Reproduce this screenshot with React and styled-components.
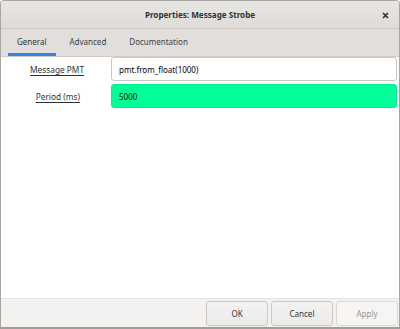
import styled, { createGlobalStyle } from 'styled-components';

const GlobalStyle = createGlobalStyle`
  html, body { margin: 0; padding: 0; background: #fff; }
  body { font-family: "Noto Sans", "Open Sans", sans-serif; font-size: 8px; color: #2e3436; }
`;

const Window = styled.div`
  width: 400px;
  height: 329px;
  box-sizing: border-box;
  border: 1px solid #a8a6a3;
  border-bottom: 2px solid #9f9d9a;
  border-radius: 4px 4px 0 0;
  display: flex;
  flex-direction: column;
  background: #fff;
  overflow: hidden;
`;

const TitleBar = styled.div`
  height: 27px;
  flex: none;
  display: flex;
  align-items: center;
  justify-content: center;
  position: relative;
  background: linear-gradient(#e8e6e3, #dedbd8);
  font-weight: bold;
  font-size: 8.1px;
  color: #2e3436;
`;

const CloseButton = styled.div`
  position: absolute;
  right: 10px;
  top: 10px;
  width: 8px;
  height: 8px;
  display: flex;
  align-items: center;
  justify-content: center;
`;

const TabBar = styled.div`
  height: 27px;
  flex: none;
  display: flex;
  align-items: stretch;
  background: #e1dedb;
  border-top: 1px solid #cfccc8;
  border-bottom: 1px solid #cfccc8;
  padding-left: 7px;
`;

const Tab = styled.div`
  display: flex;
  align-items: center;
  padding: 1px 9px 0;
  margin-right: 5px;
  color: ${p => (p.$active ? '#2e3436' : '#3d4244')};
  border-bottom: 3px solid ${p => (p.$active ? '#3584e4' : 'transparent')};
  box-sizing: border-box;
`;

const Content = styled.div`
  flex: 1;
  padding: 0 2px 0 0;
  display: flex;
  flex-direction: column;
  gap: 3px;
`;

const Row = styled.div`
  display: grid;
  grid-template-columns: 110px 1fr;
  align-items: center;
`;

const Label = styled.span`
  justify-self: end;
  margin-right: 27px;
  text-decoration: underline;
  text-underline-offset: 2px;
  color: #2e3436;
  font-size: 8.3px;
  padding-right: ${p => p.$pad || 0}px;
`;

const Field = styled.div`
  height: 24px;
  box-sizing: border-box;
  display: flex;
  align-items: center;
  padding-left: 7px;
  border: 1px solid ${p => (p.$bg ? '#00f090' : '#cdc7c2')};
  border-radius: 3px;
  background: ${p => p.$bg || '#fff'};
  color: #000;
`;

const Footer = styled.div`
  height: 28px;
  flex: none;
  display: flex;
  justify-content: flex-end;
  align-items: center;
  gap: 3px;
  padding-right: 1px;
  background: #f3f2f1;
  border-top: 1px solid #e6e4e2;
`;

const Button = styled.div`
  width: 62px;
  height: 25px;
  box-sizing: border-box;
  display: flex;
  align-items: center;
  justify-content: center;
  border: 1px solid #cdc7c2;
  border-radius: 3px;
  background: ${p => (p.$disabled ? '#f6f5f4' : 'linear-gradient(#f4f3f2, #edebe9)')};
  color: ${p => (p.$disabled ? '#929595' : '#2e3436')};
  border-color: ${p => (p.$disabled ? '#dcd8d5' : '#cdc7c2')};
`;

export default function App() {
  return (
    <>
      <GlobalStyle />
      <Window>
        <TitleBar>
          Properties: Message Strobe
          <CloseButton>
            <svg width="7" height="7" viewBox="0 0 7 7">
              <path d="M1 1L6 6M6 1L1 6" stroke="#2e3436" strokeWidth="1.7" />
            </svg>
          </CloseButton>
        </TitleBar>
        <TabBar>
          <Tab $active>General</Tab>
          <Tab>Advanced</Tab>
          <Tab>Documentation</Tab>
        </TabBar>
        <Content>
          <Row>
            <Label>Message PMT</Label>
            <Field>pmt.from_float(1000)</Field>
          </Row>
          <Row>
            <Label $pad={4}>Period (ms)</Label>
            <Field $bg="#00ff99">5000</Field>
          </Row>
        </Content>
        <Footer>
          <Button>OK</Button>
          <Button>Cancel</Button>
          <Button $disabled>Apply</Button>
        </Footer>
      </Window>
    </>
  );
}
